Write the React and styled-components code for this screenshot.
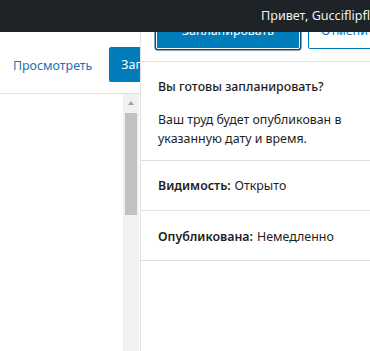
import React from "react";
import styled, { createGlobalStyle } from "styled-components";

const GlobalStyle = createGlobalStyle`
  html, body { margin: 0; padding: 0; background: #fff; }
  body {
    font-family: "Noto Sans", "Open Sans", sans-serif;
    font-size: 12.4px;
    color: #1e1e1e;
    overflow: hidden;
  }
  * { box-sizing: border-box; }
`;

const Page = styled.div`
  position: relative;
  width: 370px;
  height: 351px;
  overflow: hidden;
  background: #fff;
`;

const AdminBar = styled.div`
  position: absolute;
  top: 0;
  left: 0;
  right: 0;
  height: 32px;
  z-index: 20;
  background: #1d2327;
  color: #f0f0f1;
  display: flex;
  align-items: center;
  padding-left: 261px;
  white-space: nowrap;
  font-size: 12.6px;
  line-height: 32px;
  overflow: hidden;
`;

const Editor = styled.div`
  padding-top: 32px;
  display: flex;
  flex-direction: column;
  height: 100%;
`;

const EditorHeader = styled.div`
  height: 62px;
  border-bottom: 1px solid #e0e0e0;
  display: flex;
  align-items: flex-start;
  padding: 15px 0 0 13px;
  gap: 17px;
  white-space: nowrap;
`;

const LinkButton = styled.span`
  color: #2271b1;
  height: 35px;
  display: flex;
  align-items: center;
  padding-top: 2px;
`;

const PrimaryButton = styled.span`
  background: #007cba;
  color: #fff;
  border-radius: 2px;
  height: ${(p) => p.$h || 35}px;
  padding: 0 12px;
  display: inline-flex;
  align-items: center;
  justify-content: center;
  white-space: nowrap;
  ${(p) =>
    p.$focus &&
    `box-shadow: inset 0 0 0 1px #fff, 0 0 0 1.5px #0a4b78; width: 144px;`}
`;

const SecondaryButton = styled.span`
  background: #fff;
  color: #007cba;
  border: 1px solid #007cba;
  border-radius: 2px;
  height: 36px;
  padding: 0 12px;
  display: inline-flex;
  align-items: center;
  white-space: nowrap;
`;

const EditorBody = styled.div`
  flex: 1;
  display: flex;
`;

const Content = styled.div`
  width: 123px;
`;

const ScrollTrack = styled.div`
  width: 16px;
  background: #f1f1f1;
  display: flex;
  flex-direction: column;
  align-items: center;
`;

const ScrollArrow = styled.div`
  height: 18px;
  width: 16px;
  display: flex;
  align-items: center;
  justify-content: center;
  &::before {
    content: "";
    border-left: 3.5px solid transparent;
    border-right: 3.5px solid transparent;
    border-bottom: 4px solid #a3a3a3;
  }
`;

const ScrollThumb = styled.div`
  width: 12px;
  height: 102px;
  margin-top: 1px;
  background: #c1c1c1;
`;

const Panel = styled.aside`
  position: absolute;
  top: 0;
  bottom: 0;
  left: 140px;
  width: 300px;
  background: #fff;
  border-left: 1px solid #e0e0e0;
  z-index: 10;
  display: flex;
  flex-direction: column;
`;

const PanelHeader = styled.div`
  height: 62px;
  border-bottom: 1px solid #e0e0e0;
  display: flex;
  align-items: center;
  gap: 8px;
  padding-left: 15px;
`;

const Intro = styled.div`
  padding: 16px 16px 12px 17px;
  border-bottom: 1px solid #e0e0e0;
`;

const IntroTitle = styled.div`
  font-weight: 500;
  line-height: 18px;
  white-space: nowrap;
`;

const IntroText = styled.p`
  margin: 14px 0 0;
  line-height: 19px;
  width: 200px;
`;

const Row = styled.div`
  height: 50px;
  border-bottom: 1px solid #e0e0e0;
  display: flex;
  align-items: center;
  padding: ${(p) => (p.$low ? "2px" : "0")} 16px 0 17px;
  white-space: nowrap;
`;

const Label = styled.span`
  font-weight: 600;
  margin-right: 4px;
`;

export default function App() {
  return (
    <Page>
      <GlobalStyle />
      <AdminBar>Привет, Gucciflipflop</AdminBar>
      <Editor>
        <EditorHeader>
          <LinkButton>Просмотреть</LinkButton>
          <PrimaryButton>Запланировать</PrimaryButton>
        </EditorHeader>
        <EditorBody>
          <Content />
          <ScrollTrack>
            <ScrollArrow />
            <ScrollThumb />
          </ScrollTrack>
        </EditorBody>
      </Editor>
      <Panel>
        <PanelHeader>
          <PrimaryButton $focus $h={36}>Запланировать</PrimaryButton>
          <SecondaryButton>Отменить</SecondaryButton>
        </PanelHeader>
        <Intro>
          <IntroTitle>Вы готовы запланировать?</IntroTitle>
          <IntroText>Ваш труд будет опубликован в указанную дату и время.</IntroText>
        </Intro>
        <Row>
          <Label>Видимость:</Label>Открыто
        </Row>
        <Row $low>
          <Label>Опубликована:</Label>Немедленно
        </Row>
      </Panel>
    </Page>
  );
}
